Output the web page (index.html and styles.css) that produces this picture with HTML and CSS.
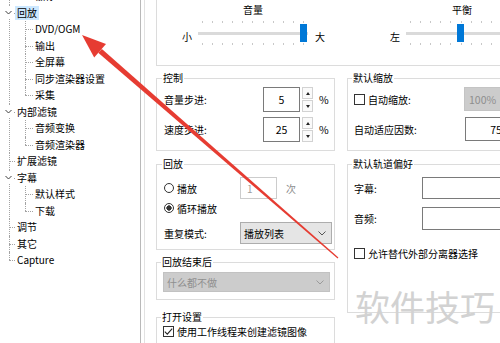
FILE: index.html
```html
<!DOCTYPE html>
<html lang="zh-CN">
<head>
<meta charset="utf-8">
<title>选项 - 回放</title>
<link rel="stylesheet" href="styles.css">
</head>
<body>
<div class="app">
  <nav class="tree-pane">
    <ul class="tree">
      <li class="l0"><div class="row"><span class="tw"><svg width="11" height="11" viewBox="0 0 11 11"><path d="M2.5 4 L5.5 7 L8.5 4" fill="none" stroke="#404040" stroke-width="1"/></svg></span><span class="lbl">播放器</span></div>
        <ul>
          <li class="l1"><div class="row"><span class="lbl">徽标</span></div></li>
        </ul>
      </li>
      <li class="l0"><div class="row"><span class="tw"><svg width="11" height="11" viewBox="0 0 11 11"><path d="M2.5 4 L5.5 7 L8.5 4" fill="none" stroke="#404040" stroke-width="1"/></svg></span><span class="lbl sel">回放</span></div>
        <ul>
          <li class="l1"><div class="row"><span class="lbl">DVD/OGM</span></div></li>
          <li class="l1"><div class="row"><span class="lbl">输出</span></div></li>
          <li class="l1"><div class="row"><span class="lbl">全屏幕</span></div></li>
          <li class="l1"><div class="row"><span class="lbl">同步渲染器设置</span></div></li>
          <li class="l1"><div class="row"><span class="lbl">采集</span></div></li>
        </ul>
      </li>
      <li class="l0"><div class="row"><span class="tw"><svg width="11" height="11" viewBox="0 0 11 11"><path d="M2.5 4 L5.5 7 L8.5 4" fill="none" stroke="#404040" stroke-width="1"/></svg></span><span class="lbl">内部滤镜</span></div>
        <ul>
          <li class="l1"><div class="row"><span class="lbl">音频变换</span></div></li>
          <li class="l1"><div class="row"><span class="lbl">音频渲染器</span></div></li>
        </ul>
      </li>
      <li class="l0"><div class="row"><span class="tw"></span><span class="lbl">扩展滤镜</span></div></li>
      <li class="l0"><div class="row"><span class="tw"><svg width="11" height="11" viewBox="0 0 11 11"><path d="M2.5 4 L5.5 7 L8.5 4" fill="none" stroke="#404040" stroke-width="1"/></svg></span><span class="lbl">字幕</span></div>
        <ul>
          <li class="l1"><div class="row"><span class="lbl">默认样式</span></div></li>
          <li class="l1"><div class="row"><span class="lbl">下载</span></div></li>
        </ul>
      </li>
      <li class="l0"><div class="row"><span class="tw"></span><span class="lbl">调节</span></div></li>
      <li class="l0"><div class="row"><span class="tw"></span><span class="lbl">其它</span></div></li>
      <li class="l0"><div class="row"><span class="tw"></span><span class="lbl">Capture</span></div></li>
    </ul>
  </nav>

  <main class="page">
    <fieldset class="grp sliders">
      <div class="sl-row">
        <span class="sl-end end-min">小</span>
        <div class="slider vol">
          <div class="sl-title">音量</div>
          <div class="sl-body">
            <div class="ticks top"></div>
            <div class="track"></div>
            <div class="thumb" style="left:102px"></div>
            <div class="ticks bot"></div>
          </div>
        </div>
        <span class="sl-end end-max">大</span>
        <span class="sl-end end-left">左</span>
        <div class="slider bal">
          <div class="sl-title">平衡</div>
          <div class="sl-body">
            <div class="ticks top"></div>
            <div class="track"></div>
            <div class="thumb" style="left:51px"></div>
            <div class="ticks bot"></div>
          </div>
        </div>
      </div>
    </fieldset>

    <div class="grid-row row2">
      <fieldset class="grp col-l ctrl">
        <legend>控制</legend>
        <div class="frow r25">
          <span class="cell w99">音量步进:</span>
          <div class="spin"><div class="spin-val">5</div><div class="spin-btns"><span class="spin-btn"><i class="up"></i></span><span class="spin-btn"><i class="dn"></i></span></div></div>
          <span class="pct">%</span>
        </div>
        <div class="frow r25 mt5">
          <span class="cell w99">速度步进:</span>
          <div class="spin"><div class="spin-val">25</div><div class="spin-btns"><span class="spin-btn"><i class="up"></i></span><span class="spin-btn"><i class="dn"></i></span></div></div>
          <span class="pct">%</span>
        </div>
      </fieldset>
      <fieldset class="grp col-r dzoom">
        <legend>默认缩放</legend>
        <div class="frow r24">
          <span class="cell w110"><span class="chk"></span>自动缩放:</span>
          <span class="box disabled">100%</span>
        </div>
        <div class="frow r24 mt6">
          <span class="cell w111">自动适应因数:</span>
          <span class="box input center">75</span>
        </div>
      </fieldset>
    </div>

    <div class="grid-row row3">
      <div class="col-l stack">
        <fieldset class="grp play">
          <legend>回放</legend>
          <div class="frow r22">
            <span class="cell w76"><span class="radio"></span>播放</span>
            <span class="box num dis-in">1</span>
            <span class="times">次</span>
          </div>
          <div class="frow r18">
            <span class="cell"><span class="radio on"></span>循环播放</span>
          </div>
          <div class="frow r22 mt5">
            <span class="cell w76">重复模式:</span>
            <span class="select"><span>播放列表</span><svg width="8" height="5" viewBox="0 0 8 5"><path d="M0.5 0.5 L4 4 L7.5 0.5" fill="none" stroke="#555" stroke-width="1"/></svg></span>
          </div>
        </fieldset>
        <fieldset class="grp after">
          <legend>回放结束后</legend>
          <span class="select wide disabled"><span>什么都不做</span><svg width="8" height="5" viewBox="0 0 8 5"><path d="M0.5 0.5 L4 4 L7.5 0.5" fill="none" stroke="#9a9a9a" stroke-width="1"/></svg></span>
        </fieldset>
        <fieldset class="grp open-set">
          <legend>打开设置</legend>
          <div class="frow r14">
            <span class="cell"><span class="chk"><svg width="11" height="11" viewBox="0 0 11 11"><path d="M1.8 5.6 L4.3 8.1 L9.2 2.6" fill="none" stroke="#222" stroke-width="1.1"/></svg></span>使用工作线程来创建滤镜图像</span>
          </div>
        </fieldset>
      </div>
      <fieldset class="grp col-r tracks">
        <legend>默认轨道偏好</legend>
        <div class="frow r22">
          <span class="cell w68">字幕:</span>
          <span class="box input long"></span>
        </div>
        <div class="frow r23 mt8">
          <span class="cell w68">音频:</span>
          <span class="box input long"></span>
        </div>
        <div class="frow r14 mt16">
          <span class="cell"><span class="chk"></span>允许替代外部分离器选择</span>
        </div>
      </fieldset>
    </div>
  </main>
</div>

<div class="watermark">软件技巧</div>

<svg class="arrow" width="500" height="343" viewBox="0 0 500 343">
  <polygon points="98.2,52.7 101.9,49.0 338.4,257.6 337.6,258.4" fill="#e63c32"/>
  <polygon points="82,35 94.2,57.6 106,44" fill="#e63c32"/>
</svg>
</body>
</html>
```

FILE: styles.css
```css
* { box-sizing: border-box; }
html, body { margin: 0; padding: 0; }
body {
  width: 500px;
  height: 343px;
  overflow: hidden;
  position: relative;
  background: #fff;
  color: #000;
  font-family: "Noto Sans CJK SC", "Noto Sans", sans-serif;
  font-size: 10px;
}
.app { display: flex; height: 343px; }

/* ---------- tree ---------- */
.tree-pane {
  width: 141px;
  flex: none;
  border-right: 1px solid #b9b9b9;
  margin-right: 3px;
  overflow: hidden;
}
.tree, .tree ul { list-style: none; margin: 0; padding: 0; }
.tree { margin-top: -28.5px; }
.tree li { position: relative; }
.row { height: 16.5px; display: flex; align-items: center; white-space: nowrap; }
.l1 > .row { padding-left: 33px; }
.tw { width: 15px; flex: none; display: flex; align-items: center; padding-left: 3px; }
.tw svg { position: relative; z-index: 1; background: #fff; }
.lbl { padding: 0 2px; line-height: 14px; }
.sel { background: #cce8ff; }

.l0::before, .l1::before {
  content: "";
  position: absolute;
  top: 8px;
  border-top: 1px dotted #a3a3a3;
}
.l0::after, .l1::after {
  content: "";
  position: absolute;
  top: 0;
  bottom: 0;
  border-left: 1px dotted #a3a3a3;
}
.l0::before { left: 9px; width: 6px; }
.l0::after { left: 9px; }
.tree > li:last-child::after { bottom: auto; height: 8px; }
.l1::before { left: 25px; width: 8px; }
.l1::after { left: 25px; }
.l1:last-child::after { bottom: auto; height: 8px; }

/* ---------- page ---------- */
.page {
  flex: 1;
  min-width: 0;
  border-left: 1px solid #e2e2e2;
  padding-left: 11px;
  overflow: hidden;
  display: flex;
  flex-direction: column;
}
.grp {
  margin: 0;
  padding: 0;
  border: 1px solid #dcdcdc;
  min-width: 0;
  flex: none;
}
.grp > legend {
  padding: 0 1px;
  margin-left: -2px;
  line-height: 14px;
  font-size: 10px;
}

/* sliders */
.grp.sliders { margin-top: -10px; width: 400px; padding: 12px 0 20px 25px; }
.sl-row { display: flex; }
.sl-end { align-self: flex-end; line-height: 14px; margin-bottom: 1px; flex: none; }
.end-min { margin-right: 6px; }
.end-max { margin-left: 7px; }
.end-left { margin-left: 65px; margin-right: 6px; }
.slider { display: flex; flex-direction: column; flex: none; }
.slider.vol { width: 110px; }
.slider.bal { width: 112px; }
.sl-title { text-align: center; line-height: 14px; margin-bottom: 4px; }
.sl-body { position: relative; height: 24px; }
.ticks {
  position: absolute;
  left: 4px;
  right: 3px;
  height: 2px;
  background: repeating-linear-gradient(to right, #c8c8c8 0 1px, transparent 1px 10.1px);
}
.ticks.top { top: 0; }
.ticks.bot { top: 22px; }
.track { position: absolute; left: 0; right: 0; top: 11px; height: 3px; background: #dadada; }
.thumb { position: absolute; top: 3px; width: 7px; height: 18px; background: #0078d7; }

/* rows */
.grid-row { display: flex; gap: 12px; flex: none; }
.row2 { margin-top: 5px; }
.row3 { margin-top: 6px; align-items: flex-start; }
.col-l { width: 179px; flex: none; }
.col-r { width: 200px; }
.stack { display: flex; flex-direction: column; }

.grp.ctrl { padding: 2px 0 8px 7px; }
.grp.dzoom { padding: 2px 0 8px 6px; }
.grp.play { padding: 6px 1px 5px 7px; }
.grp.after { margin-top: 5px; padding: 3px 2px 7px 6px; }
.grp.open-set { margin-top: 10px; padding: 0 0 20px 6px; }
.grp.tracks { padding: 6px 0 52px 6px; }

.frow { display: flex; align-items: center; white-space: nowrap; }
.r14 { height: 14px; }
.r18 { height: 18px; }
.r22 { height: 22px; }
.r23 { height: 23px; }
.r24 { height: 24px; }
.r25 { height: 25px; }
.mt5 { margin-top: 5px; }
.mt6 { margin-top: 6px; }
.mt8 { margin-top: 8px; }
.mt16 { margin-top: 16px; }

.cell { flex: none; display: flex; align-items: center; }
.w68 { width: 68px; }
.w76 { width: 76px; }
.w99 { width: 99px; }
.w110 { width: 110px; }
.w111 { width: 111px; }

/* spin */
.spin { display: flex; height: 25px; width: 50px; flex: none; }
.spin-val {
  width: 37px;
  border: 1px solid #7a7a7a;
  display: flex;
  align-items: center;
  justify-content: center;
  font-size: 10.5px;
}
.spin-btns { margin-left: 2px; width: 11px; display: flex; flex-direction: column; gap: 1px; }
.spin-btn {
  flex: 1;
  border: 1px solid #d2d2d2;
  background: #fafafa;
  display: flex;
  align-items: center;
  justify-content: center;
}
.spin-btn i { width: 0; height: 0; border-left: 2.5px solid transparent; border-right: 2.5px solid transparent; }
.spin-btn .up { border-bottom: 3px solid #222; }
.spin-btn .dn { border-top: 3px solid #222; }
.pct { margin-left: 6px; font-size: 10.5px; }

/* boxes */
.box { flex: none; height: 100%; display: flex; align-items: center; }
.box.disabled { width: 60px; background: #cccccc; border: 1px solid #c4c4c4; color: #8e8e8e; padding-left: 4px; font-size: 10.5px; }
.box.input { border: 1px solid #7a7a7a; background: #fff; }
.box.center { width: 62px; justify-content: center; font-size: 10.5px; }
.box.long { width: 90px; }
.box.num { width: 37px; padding-left: 6px; }
.box.dis-in { border: 1px solid #cccccc; color: #a0a0a0; }
.times { margin-left: 9px; color: #8c8c8c; }

/* radio / checkbox */
.radio {
  width: 10px;
  height: 10px;
  border: 1px solid #333;
  border-radius: 50%;
  margin-right: 3px;
  background: #fff;
  flex: none;
}
.radio.on { background: radial-gradient(circle, #333 0 2.4px, #fff 2.9px); }
.chk {
  width: 11px;
  height: 11px;
  border: 1px solid #333;
  background: #fff;
  margin-right: 3px;
  flex: none;
  display: flex;
}
.chk svg { margin: -1px; }

/* select */
.select {
  flex: none;
  width: 92px;
  height: 100%;
  display: flex;
  align-items: center;
  justify-content: space-between;
  padding: 0 5px 0 3px;
  background: #e5e5e5;
  border: 1px solid #adadad;
}
.select.wide { width: 167px; height: 20px; }
.select.disabled { background: #cccccc; border-color: #c2c2c2; color: #8f8f8f; }

/* overlays */
.watermark {
  position: absolute;
  left: 355px;
  top: 287px;
  font-size: 35px;
  line-height: 38px;
  color: #d2d2d2;
  white-space: nowrap;
}
.arrow { position: absolute; left: 0; top: 0; pointer-events: none; }
```
